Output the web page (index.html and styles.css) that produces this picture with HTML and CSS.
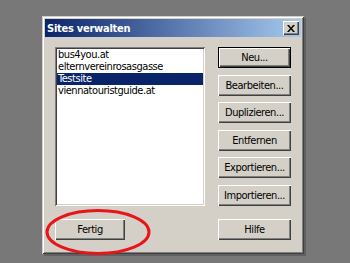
FILE: index.html
```html
<!DOCTYPE html>
<html>
<head>
<meta charset="utf-8">
<link rel="stylesheet" href="styles.css">
</head>
<body>
<div class="dialog">
  <div class="titlebar">
    <span class="title">Sites verwalten</span>
    <span class="close"><svg width="8" height="7" viewBox="0 0 8 7"><path d="M0 0h2l2 2.5L6 0h2L5 3.5 8 7H6L4 4.5 2 7H0l3-3.5z" fill="#000"/></svg></span>
  </div>
  <div class="content">
    <div class="listbox">
      <div class="item">bus4you.at</div>
      <div class="item">elternvereinrosasgasse</div>
      <div class="item selected">Testsite</div>
      <div class="item">viennatouristguide.at</div>
    </div>
    <div class="buttons">
      <div class="btn default">Neu...</div>
      <div class="btn">Bearbeiten...</div>
      <div class="btn">Duplizieren...</div>
      <div class="btn">Entfernen</div>
      <div class="btn">Exportieren...</div>
      <div class="btn">Importieren...</div>
    </div>
    <div class="btn fertig">Fertig</div>
    <div class="btn">Hilfe</div>
  </div>
  <svg class="ring" width="106" height="48" viewBox="0 0 106 48"><ellipse cx="53" cy="24" rx="51" ry="21.5" fill="none" stroke="#e8141c" stroke-width="3"/></svg>
</div>
</body>
</html>
```
FILE: styles.css
```css
html, body {
  margin: 0;
  padding: 0;
}
body {
  width: 350px;
  height: 263px;
  background: #787878;
  overflow: hidden;
  font-family: "DejaVu Sans Condensed", "DejaVu Sans", "Liberation Sans", sans-serif;
  font-stretch: condensed;
  font-size: 11px;
  letter-spacing: -0.45px;
  color: #000;
}
.dialog {
  position: relative;
  margin: 16px 0 0 42px;
  width: 262px;
  height: 238px;
  box-sizing: border-box;
  padding: 3px;
  background: #d4d0c8;
  box-shadow: inset 1px 1px 0 #d4d0c8, inset -1px -1px 0 #404040, inset 2px 2px 0 #fff, inset -2px -2px 0 #808080, 2px 2px 0 #606060;
}
.titlebar {
  height: 18px;
  display: flex;
  align-items: center;
  justify-content: space-between;
  background: linear-gradient(to right, #0a246a, #a6caf0);
  padding: 0 2px 0 2px;
}
.title {
  color: #fff;
  font-weight: bold;
  font-size: 11px;
  letter-spacing: -0.25px;
}
.close {
  width: 16px;
  height: 14px;
  box-sizing: border-box;
  background: #d4d0c8;
  display: flex;
  align-items: center;
  justify-content: center;
  box-shadow: inset 1px 1px 0 #fff, inset -1px -1px 0 #404040, inset -2px -2px 0 #808080;
}
.content {
  display: grid;
  grid-template-columns: 150px 73px;
  grid-template-rows: 159px 22px;
  column-gap: 13px;
  row-gap: 13px;
  padding: 10px 0 0 10px;
}
.listbox {
  background: #fff;
  box-sizing: border-box;
  padding: 2px;
  box-shadow: inset 1px 1px 0 #808080, inset -1px -1px 0 #fff, inset 2px 2px 0 #404040, inset -2px -2px 0 #d4d0c8;
}
.item {
  height: 12px;
  line-height: 12px;
  padding-left: 1px;
  white-space: nowrap;
}
.item.selected {
  background: #0a246a;
  color: #fff;
}
.buttons {
  display: flex;
  flex-direction: column;
  gap: 6.6px;
}
.btn {
  height: 21px;
  box-sizing: border-box;
  display: flex;
  align-items: center;
  justify-content: center;
  background: #d4d0c8;
  box-shadow: inset 1px 1px 0 #fff, inset -1px -1px 0 #404040, inset -2px -2px 0 #808080;
}
.btn.default {
  box-shadow: inset 0 0 0 1px #000, inset 2px 2px 0 #fff, inset -2px -2px 0 #404040, inset -3px -3px 0 #808080;
}
.fertig {
  width: 70px;
}
.ring {
  position: absolute;
  left: 3px;
  top: 192px;
}
```
